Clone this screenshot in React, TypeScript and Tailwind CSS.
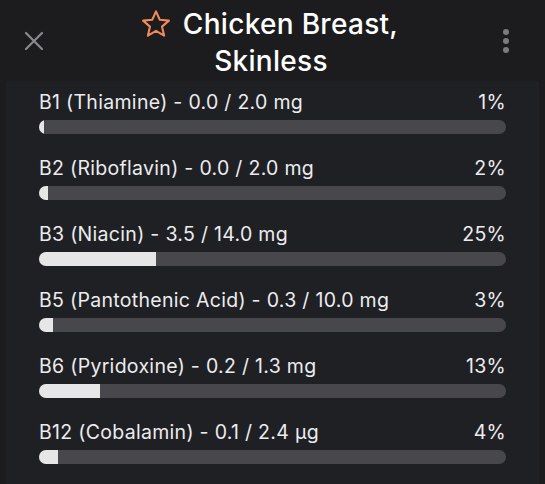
import React from "react";

const rows = [
  { label: "B1 (Thiamine) - 0.0 / 2.0 mg", pct: 1, w: 1 },
  { label: "B2 (Riboflavin) - 0.0 / 2.0 mg", pct: 2, w: 2 },
  { label: "B3 (Niacin) - 3.5 / 14.0 mg", pct: 25, w: 25 },
  { label: "B5 (Pantothenic Acid) - 0.3 / 10.0 mg", pct: 3, w: 3 },
  { label: "B6 (Pyridoxine) - 0.2 / 1.3 mg", pct: 13, w: 13 },
  { label: "B12 (Cobalamin) - 0.1 / 2.4 µg", pct: 4, w: 4 },
];

export default function App() {
  return (
    <div
      className="w-[545px] h-[484px] overflow-hidden bg-[#1c1c1e] flex flex-col"
      style={{ fontFamily: "Inter, 'Liberation Sans', Arial, sans-serif" }}
    >
      <div className="h-[81px] flex items-center px-[22px] shrink-0">
        <div className="w-[24px] flex items-center justify-center">
          <svg width="22" height="22" viewBox="0 0 22 22" fill="none" stroke="#8a8a8e" strokeWidth="2.2" strokeLinecap="round">
            <path d="M3 3 L19 19 M19 3 L3 19" />
          </svg>
        </div>
        <div className="flex-1 text-center text-white text-[28px] leading-[37px] font-medium tracking-[0.3px] pt-[4px]">
          <div className="flex items-center justify-center gap-[11px] pr-[2px]">
            <svg width="32" height="30" viewBox="0 0 24 23" fill="none" stroke="#f08a5d" strokeWidth="1.6" strokeLinejoin="round">
              <path d="M12 1.8 L14.9 8.3 L21.9 8.9 L16.6 13.5 L18.2 20.4 L12 16.8 L5.8 20.4 L7.4 13.5 L2.1 8.9 L9.1 8.3 Z" />
            </svg>
            <span>Chicken Breast,</span>
          </div>
          <div className="pl-[2px]">Skinless</div>
        </div>
        <div className="w-[24px] flex flex-col items-center gap-[3px] mr-[5px]">
          <span className="block w-[6px] h-[6px] rounded-full bg-[#7c7c80]" />
          <span className="block w-[6px] h-[6px] rounded-full bg-[#7c7c80]" />
          <span className="block w-[6px] h-[6px] rounded-full bg-[#7c7c80]" />
        </div>
      </div>
      <div className="flex-1 mx-[6px] bg-[#1f2024] px-[33px] pt-[9px]">
        {rows.map((r) => (
          <div key={r.label} className="h-[66px] flex flex-col">
            <div className="flex justify-between items-end text-[#ececee] text-[19.5px] leading-[24px] tracking-[0.3px]">
              <span>{r.label}</span>
              <span>{r.pct}%</span>
            </div>
            <div className="mt-[6px] h-[14px] rounded-full bg-[#48484c] overflow-hidden">
              <div className="h-full bg-[#e6e6e6]" style={{ width: `${r.w}%` }} />
            </div>
          </div>
        ))}
      </div>
    </div>
  );
}
